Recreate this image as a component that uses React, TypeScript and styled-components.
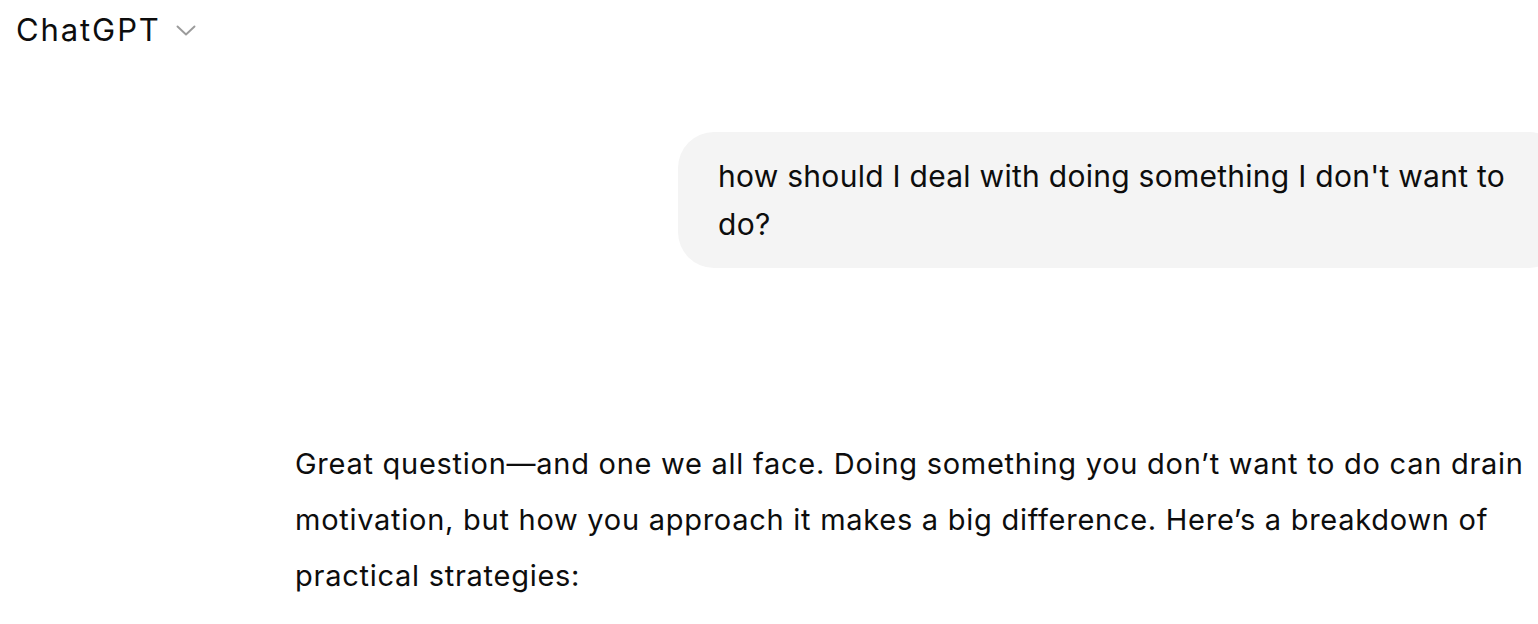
import React from "react";
import styled, { createGlobalStyle } from "styled-components";

const GlobalStyle = createGlobalStyle`
  html, body {
    margin: 0;
    padding: 0;
    background: #ffffff;
    overflow: hidden;
  }
  body {
    font-family: Inter, "Noto Sans", "Liberation Sans", sans-serif;
    color: #0d0d0d;
  }
`;

const App: React.FC = () => {
  return (
    <>
      <GlobalStyle />
      <Page>
        <Header>
          <ModelPicker>
            <ModelName>ChatGPT</ModelName>
            <Chevron viewBox="0 0 20 11" fill="none">
              <path
                d="M1.5 1.5l8.5 8 8.5-8"
                stroke="#9b9b9b"
                strokeWidth="1.9"
                strokeLinecap="round"
                strokeLinejoin="round"
              />
            </Chevron>
          </ModelPicker>
        </Header>
        <Thread>
          <UserRow>
            <UserBubble>
              how should I deal with doing something I don't want to do?
            </UserBubble>
          </UserRow>
          <AssistantText>
            Great question—and one we all face. Doing something you don’t want
            to do can drain motivation, but how you approach it makes a big
            difference. Here’s a breakdown of practical strategies:
          </AssistantText>
        </Thread>
      </Page>
    </>
  );
};

const Page = styled.div`
  width: 1538px;
  height: 624px;
  display: flex;
  flex-direction: column;
`;

const Header = styled.div`
  display: flex;
  align-items: center;
  height: 58px;
  padding: 0 16px;
`;

const ModelPicker = styled.div`
  display: flex;
  align-items: center;
  gap: 15px;
`;

const ModelName = styled.span`
  font-size: 31px;
  font-weight: 400;
  letter-spacing: 1.9px;
`;

const Chevron = styled.svg`
  width: 20px;
  height: 11px;
  margin-top: 2px;
`;

const Thread = styled.div`
  display: flex;
  flex-direction: column;
  padding: 74px 0 0 295px;
  width: 1270px;
`;

const UserRow = styled.div`
  display: flex;
  justify-content: flex-end;
`;

const UserBubble = styled.div`
  box-sizing: border-box;
  width: 887px;
  padding: 20px 40px 20px 40px;
  border-radius: 36px;
  background: #f4f4f4;
  font-size: 30px;
  line-height: 48px;
  letter-spacing: 0.27px;
`;

const AssistantText = styled.p`
  margin: 168px 0 0 0;
  font-size: 29px;
  line-height: 56px;
  letter-spacing: 0.73px;
`;

export default App;
